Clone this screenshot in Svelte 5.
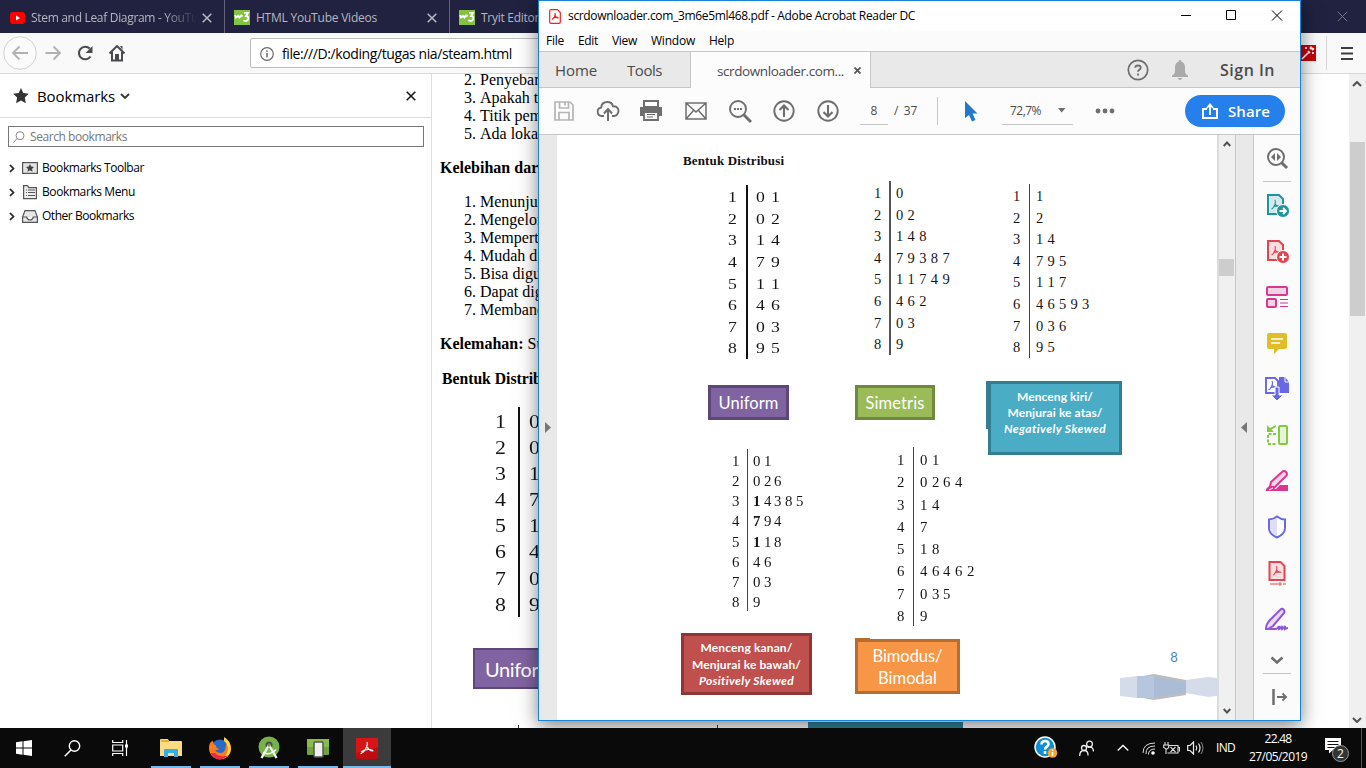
<script>
  const charts = {
    uniform: ['01', '02', '14', '79', '11', '46', '03', '95'],
    simetris: ['0', '02', '148', '79387', '11749', '462', '03', '9'],
    kiri: ['1', '2', '14', '795', '117', '46593', '036', '95'],
    kanan: ['01', '026', '14385', '794', '118', '46', '03', '9'],
    bimodus: ['01', '0264', '14', '7', '18', '46462', '035', '9'],
    web: ['0', '0', '1', '7', '1', '4', '0', '9']
  };
  const menus = [['File', 18], ['Edit', 20], ['View', 25], ['Window', 44], ['Help', 25]];
  const folders = ['Bookmarks Toolbar', 'Bookmarks Menu', 'Other Bookmarks'];
  const folderWidths = [102, 93, 92];
  const firstList = ['Penyebar', 'Apakah t', 'Titik pem', 'Ada loka'];
  const secondList = ['Menunju', 'Mengelor', 'Mempert', 'Mudah d', 'Bisa digu', 'Dapat dig', 'Memband'];

  /* Adjusts tracking so a label keeps its designed width. */
  function fit(node, width) {
    const natural = node.getBoundingClientRect().width;
    node.style.letterSpacing = `${(width - natural) / node.textContent.length}px`;
  }
</script>

{#snippet chart(name)}
  <div class="chart {name}">
    <div class="stems">{#each charts[name] as _, i}<span>{i + 1}</span>{/each}</div>
    <div class="leaves">
      {#each charts[name] as row, r}
        <div>{#each row.split('') as d, c}<span class:heavy={name === 'kanan' && c === 0 && (r === 2 || r === 3 || r === 4)}>{d}</span>{/each}</div>
      {/each}
    </div>
  </div>
{/snippet}

{#snippet w3()}
  <svg class="fav" width="16" height="15" viewBox="0 0 16 15"><rect width="16" height="15" fill="#84c340" /><path d="M1 5l1 2.500L4 6l1.500 1.500L7 5M7 5l1.500 1.500M10 2.800h4l-2 3.200q2.500 0 2.300 2.500Q14 11 11.500 11q-1.500 0-2-1" fill="none" stroke="#fff" stroke-width="1.800" /></svg>
{/snippet}

{#snippet cross(size, color, w)}
  <svg width={size} height={size} viewBox="0 0 10 10"><path d="M.7.7l8.600 8.600M9.300.7L.7 9.300" stroke={color} stroke-width={w} fill="none" /></svg>
{/snippet}

{#snippet reader(x, y, color)}
  <path transform="translate({x} {y})" d="M4 0c1 2 .5 3.500-.3 5C2.800 7 1.500 9 .4 8.800M3.900 3.500c1 2 2.500 3.200 5 2.700M2.500 6.800c2-1 4-1.200 6-.6" fill="none" stroke={color} stroke-width="1.100" />
{/snippet}

<div class="desktop">
  <div class="browser">
    <div class="tabs">
      <div class="tab first">
        <svg width="15" height="12" viewBox="0 0 15 12"><rect width="15" height="12" rx="3" fill="#f00" /><path d="M6 3.500v5L10 6z" fill="#fff" /></svg>
        <span class="label fade"><span use:fit={167}>Stem and Leaf Diagram - YouTu</span></span>
        {@render cross(10, '#b9b9c4', 1.5)}
      </div>
      <div class="tab">
        {@render w3()}
        <span class="label"><span use:fit={121}>HTML YouTube Videos</span></span>
        {@render cross(10, '#b9b9c4', 1.5)}
      </div>
      <div class="tab">
        {@render w3()}
        <span class="label"><span use:fit={58}>Tryit Editor</span></span>
      </div>
      <div class="tabs-close">{@render cross(11, '#77788a', 0.9)}</div>
    </div>

    <div class="nav">
      <svg class="navicons" width="128" height="39" viewBox="0 0 128 39">
        <circle cx="20" cy="19" r="16.300" fill="#fbfbfb" stroke="#d2d2d3" />
        <g fill="none" stroke="#b2b2b3" stroke-width="1.900">
          <path d="M12.500 19H28M19.500 12.500L13 19l6.500 6.500" />
          <path d="M45.500 19H60M53.500 12.500L60 19l-6.500 6.500" />
        </g>
        <path d="M90.500 22.500A6.300 6.300 0 1 1 89.700 14.500" fill="none" stroke="#4b4b4d" stroke-width="2.100" /><path d="M92.500 12v7h-7z" fill="#4b4b4d" />
        <g fill="none" stroke="#4b4b4d" stroke-width="2"><path d="M109.500 19.500L117 12l7.500 7.500" stroke-linejoin="round" /><path d="M112 18v8.500h10V18" /></g><path d="M115 20h4v6h-4z" fill="#4b4b4d" /><path d="M120 12h2.500v4z" fill="#4b4b4d" />
      </svg>
      <div class="url">
        <svg width="14" height="14" viewBox="0 0 14 14"><circle cx="7" cy="7" r="6.300" fill="none" stroke="#6b6b6c" stroke-width="1.200" /><path d="M7 6v4.500M7 3.300v1.400" stroke="#6b6b6c" stroke-width="1.500" /></svg>
        <span use:fit={230}>file:///D:/koding/tugas nia/steam.html</span>
      </div>
      <div class="navright">
        <svg width="16" height="16" viewBox="0 0 16 16"><rect width="16" height="16" fill="#c80009" /><path d="M2 14L9 7M8 6l2 2M11 1.500v3M9.500 3h3M13 7v2M6 2v2M12 5l2-1.500" stroke="#fff" stroke-width="1.700" /></svg>
        <i></i>
        <svg class="burger" width="12" height="13" viewBox="0 0 12 13"><path d="M0 1h12M0 6.500h12M0 12h12" stroke="#3e3e3f" stroke-width="2" /></svg>
      </div>
    </div>

    <div class="content">
      <aside>
        <header>
          <svg width="16" height="16" viewBox="0 0 16 16"><path d="M8 0l2.300 5.100 5.500.7-4 3.800 1 5.700L8 12.500l-4.900 2.800 1-5.700-4-3.800 5.600-.7z" fill="#333" /></svg>
          <span use:fit={78}>Bookmarks</span>
          <svg class="down" width="10" height="6" viewBox="0 0 10 6"><path d="M1 1l4 4 4-4" fill="none" stroke="#333" stroke-width="1.800" /></svg>
          <div class="close">{@render cross(10, '#1a1a1a', 1.6)}</div>
        </header>
        <div class="search">
          <svg width="12" height="12" viewBox="0 0 12 12"><circle cx="7" cy="4.700" r="4" fill="none" stroke="#888" /><path d="M4 7.500L.5 11.500" stroke="#888" /></svg>
          <span use:fit={97}>Search bookmarks</span>
        </div>
        <ul>
          {#each folders as name, i}
            <li>
              <svg width="6" height="9" viewBox="0 0 6 9"><path d="M1 1l3.500 3.500L1 8" fill="none" stroke="#222" stroke-width="1.700" /></svg>
              <svg class="folder" width="16" height="15" viewBox="0 0 16 15">
                {#if i === 0}<rect x=".6" y="1.600" width="14.800" height="10.800" fill="#e4e4e4" stroke="#555" stroke-width="1.200" /><path d="M8 3l1.300 2.500 2.700.4-2 2 .6 2.800L8 9.300l-2.600 1.400.6-2.800-2-2 2.700-.4z" fill="#444" />
                {:else if i === 1}<path d="M1.600.6h4l1 2h7.800v11H1.600z" fill="#efefef" stroke="#555" stroke-width="1.200" /><path d="M4 5h1M6 5h7M4 7.500h1M6 7.500h7M4 10.500h1M6 10.500h7" stroke="#555" />
                {:else}<path d="M.6 8L3 1.600h10L15.400 8v5.400H.6zM.6 8h4q1 3 3.400 3t3.400-3h4" fill="#e6e6e6" stroke="#555" stroke-width="1.200" />{/if}
              </svg>
              <span use:fit={folderWidths[i]}>{name}</span>
            </li>
          {/each}
        </ul>
      </aside>
      <main>
        <ol start="2">{#each firstList as t}<li>{t}</li>{/each}</ol>
        <p><b>Kelebihan dar</b></p>
        <ol>{#each secondList as t}<li>{t}</li>{/each}</ol>
        <p><b>Kelemahan:</b> Su</p>
        <h4>Bentuk Distrib</h4>
        {@render chart('web')}
        <div class="webbadge">Unifor</div>
        <div class="webnext"><i></i><i></i><b></b></div>
      </main>
      <div class="vscroll">
        <svg width="10" height="6" viewBox="0 0 10 6"><path d="M1 5l4-4 4 4" fill="none" stroke="#505050" stroke-width="2" /></svg>
        <i></i>
        <svg width="10" height="6" viewBox="0 0 10 6"><path d="M1 1l4 4 4-4" fill="none" stroke="#505050" stroke-width="2" /></svg>
      </div>
    </div>
  </div>

  <div class="acrobat">
    <div class="title">
      <svg width="12" height="15" viewBox="0 0 12 15"><path d="M2 .7h6.500l2.800 2.800V13q0 1.300-1.300 1.300H2Q.7 14.300.7 13V2Q.7.7 2 .7z" fill="#fff" stroke="#e22" stroke-width="1.200" /><path d="M6 4c.5 2-1 5-3 6.500M5.500 6q1 2.500 4 3M4 9q2.500-1 5-.2" fill="none" stroke="#e22" stroke-width="1.300" /></svg>
      <span use:fit={347}>scrdownloader.com_3m6e5ml468.pdf - Adobe Acrobat Reader DC</span>
      <svg class="controls" width="102" height="12" viewBox="0 0 102 12"><path d="M0 5.500h10M45.500.5h9v9h-9zM91 .5l10 10M101 .5l-10 10" fill="none" stroke="#000" /></svg>
    </div>
    <div class="menubar">{#each menus as [m, w]}<span use:fit={w}>{m}</span>{/each}</div>
    <div class="doctabs">
      <div class="plain"><span use:fit={42}>Home</span><span use:fit={35}>Tools</span></div>
      <div class="active"><span use:fit={127}>scrdownloader.com...</span>{@render cross(7, '#555', 2.5)}</div>
      <div class="account">
        <svg width="22" height="22" viewBox="0 0 22 22"><circle cx="11" cy="11" r="9.700" fill="none" stroke="#6e6e6e" stroke-width="1.700" /><path d="M8.300 8.800Q8.300 6.500 11 6.500t2.700 2.200Q13.700 10 12 11q-1 .7-1 1.800M11 14.500v2" fill="none" stroke="#6e6e6e" stroke-width="1.800" /></svg>
        <svg class="bell" width="18" height="20" viewBox="0 0 18 20"><path d="M9 0q1.500 0 1.500 1.700Q14 3 14 7v4q0 3 3 4.500V17H1v-1.500Q4 14 4 11V7q0-4 3.500-5.300Q7.500 0 9 0zM6.500 18h5q-1 2-2.500 2t-2.500-2z" fill="#aaa" /></svg>
        <b use:fit={55}>Sign In</b>
      </div>
    </div>
    <div class="toolbar">
      <div class="slot"><svg width="22" height="22" viewBox="0 0 22 22"><path d="M2 2h15l3 3v15H2zM6.500 2v6h9V2M12 2.500v3M6 20v-7.500h10V20" fill="none" stroke="#b5b5b5" stroke-width="1.700" /></svg></div>
      <div class="slot"><svg width="24" height="24" viewBox="0 0 24 24"><path d="M8 17H5.500a4.300 4.300 0 0 1-.3-8.500C5.500 4.500 8.500 3 11.500 3c3 0 5 2 5.500 4.300 3.500-.3 5.500 2 5.500 4.500S20.500 17 18 17h-2" fill="none" stroke="#6e6e6e" stroke-width="1.900" /><path d="M12 22V11M8 14.500L12 10l4 4.500" fill="none" stroke="#6e6e6e" stroke-width="2" /></svg></div>
      <div class="slot"><svg class="print" width="24" height="24" viewBox="0 0 24 24"><path d="M5 2h14v6H5z" fill="none" stroke="#6e6e6e" stroke-width="2" /><path d="M1 8h22v9h-4v-4H5v4H1z" fill="#6e6e6e" /><path d="M5 13h14v8H5z" fill="#fbfbfb" stroke="#6e6e6e" stroke-width="1.800" /><path d="M8 15.500h8M8 18h6" stroke="#6e6e6e" stroke-width="1.200" /></svg></div>
      <div class="slot"><svg width="24" height="20" viewBox="0 0 24 20"><path d="M2 2h20v16H2zM2 2l10 9L22 2M2 18l7.500-8.500M22 18l-7.500-8.500" fill="none" stroke="#6e6e6e" stroke-width="1.500" /></svg></div>
      <div class="slot"><svg width="24" height="24" viewBox="0 0 24 24"><circle cx="10" cy="10" r="8" fill="none" stroke="#6e6e6e" stroke-width="1.900" /><path d="M15.500 15.500L23 23" stroke="#6e6e6e" stroke-width="3" /><path d="M6 9h2v2H6zM9 9h2v2H9zM12 9h2v2h-2z" fill="#6e6e6e" /></svg></div>
      <div class="slot"><svg width="24" height="24" viewBox="0 0 24 24"><circle cx="12" cy="12" r="9.700" fill="none" stroke="#6e6e6e" stroke-width="1.900" /><path d="M12 18V7M7.500 11L12 6.500l4.500 4.500" fill="none" stroke="#6e6e6e" stroke-width="2.100" /></svg></div>
      <div class="slot"><svg width="24" height="24" viewBox="0 0 24 24"><circle cx="12" cy="12" r="9.700" fill="none" stroke="#6e6e6e" stroke-width="1.900" /><path d="M12 6v11M7.500 13l4.500 4.500 4.500-4.500" fill="none" stroke="#6e6e6e" stroke-width="2.100" /></svg></div>
      <div class="pageno">8</div>
      <span class="of" use:fit={23}>/&nbsp; 37</span>
      <i class="sep"></i>
      <svg class="cursor" width="13" height="21" viewBox="0 0 13 21"><path d="M0 0l12.500 12.500H7.500l3 6.500-3.500 1.500-3-6.500L0 17z" fill="#2577cc" /></svg>
      <div class="zoom"><span use:fit={31}>72,7%</span><svg width="8" height="5" viewBox="0 0 8 5"><path d="M0 0h7.500L3.700 4.500z" fill="#6e6e6e" /></svg></div>
      <svg class="dots" width="20" height="6" viewBox="0 0 20 6"><g fill="#6e6e6e"><circle cx="3" cy="3" r="2.400" /><circle cx="10" cy="3" r="2.400" /><circle cx="17" cy="3" r="2.400" /></g></svg>
      <div class="share">
        <svg width="16" height="17" viewBox="0 0 16 17"><path d="M5 6H1v9h14V6h-4" fill="none" stroke="#fff" stroke-width="2" /><path d="M8 12V2M5 5l3-3.500L11 5" fill="none" stroke="#fff" stroke-width="1.800" /></svg>
        <b use:fit={42}>Share</b>
      </div>
    </div>
    <div class="viewer">
      <div class="gutter"><svg width="6" height="11" viewBox="0 0 6 11"><path d="M0 0l6 5.500L0 11z" fill="#777" /></svg></div>
      <div class="page">
        <h4>Bentuk Distribusi</h4>
        <div class="charts one">{@render chart('uniform')}{@render chart('simetris')}{@render chart('kiri')}</div>
        <div class="badges one">
          <div class="badge purple"><span use:fit={60}>Uniform</span></div>
          <div class="badge green"><span use:fit={59}>Simetris</span></div>
          <div class="badge teal"><span use:fit={76}>Menceng kiri/</span><span use:fit={95}>Menjurai ke atas/</span><em use:fit={102}>Negatively Skewed</em></div>
        </div>
        <div class="charts two">{@render chart('kanan')}{@render chart('bimodus')}</div>
        <div class="badges two">
          <div class="badge red"><span use:fit={92}>Menceng kanan/</span><span use:fit={109}>Menjurai ke bawah/</span><em use:fit={95}>Positively Skewed</em></div>
          <div class="badge orange"><span use:fit={70}>Bimodus/</span><span use:fit={59}>Bimodal</span></div>
          <div class="folio">
            <span>8</span>
            <svg width="97" height="26" viewBox="0 0 97 26"><path d="M17 3L34 0l32 6v15l-32 5-17-3z" fill="#bdbdbd" /><path d="M0 4l17-2v22L0 22z" fill="#d4dce9" /><path d="M17 2l17 0v22l-17 0z" fill="#b6c6df" /><path d="M34 3l32 5v10l-32 6z" fill="#abbcd6" /><path d="M66 6l22-3 9 1v18l-9 1-22-4z" fill="#d4dce9" /></svg>
          </div>
        </div>
      </div>
      <div class="pscroll">
        <svg width="8" height="6" viewBox="0 0 8 6"><path d="M.7 5L4 1.500 7.300 5" fill="none" stroke="#505050" stroke-width="1.900" /></svg>
        <i></i>
        <svg width="8" height="6" viewBox="0 0 8 6"><path d="M.7 1L4 4.500 7.300 1" fill="none" stroke="#505050" stroke-width="1.900" /></svg>
      </div>
      <div class="collapse"><svg width="6" height="11" viewBox="0 0 6 11"><path d="M6 0L0 5.500 6 11z" fill="#777" /></svg></div>
      <div class="tools">
        <div class="tool line"><svg width="24" height="24" viewBox="0 0 24 24"><circle cx="11" cy="11" r="8" fill="none" stroke="#6e6e6e" stroke-width="2" /><path d="M16.500 16.500L22 22" stroke="#6e6e6e" stroke-width="3" /><path d="M10 7v8l-4-4zM12 7v8l4-4z" fill="#6e6e6e" /></svg></div>
        <div class="tool"><svg width="24" height="24" viewBox="0 0 24 24"><path d="M3 2h11l4 4v15H3z" fill="#d3e9ec" stroke="#1f949b" stroke-width="2" />{@render reader(6, 7, '#1f949b')}<circle cx="18" cy="18" r="6.500" fill="#1f949b" stroke="#fbfbfb" /><path d="M14.500 18h6M18 15l3 3-3 3" fill="none" stroke="#fff" stroke-width="1.800" /></svg></div>
        <div class="tool"><svg width="24" height="24" viewBox="0 0 24 24"><path d="M3 2h11l4 4v15H3z" fill="#f8dfe1" stroke="#e3454f" stroke-width="2" />{@render reader(6, 7, '#e3454f')}<circle cx="18" cy="18" r="6.500" fill="#e3454f" stroke="#fbfbfb" /><path d="M14.500 18h7M18 14.500v7" stroke="#fff" stroke-width="2" /></svg></div>
        <div class="tool"><svg width="24" height="24" viewBox="0 0 24 24"><g fill="#f2d3e5" stroke="#d83790" stroke-width="2"><rect x="2" y="2" width="20" height="8" rx="1" /><rect x="2" y="14" width="9" height="8" rx="1" /></g><path d="M15 14.500h8M15 18h8M15 21.500h8" stroke="#d83790" /></svg></div>
        <div class="tool"><svg width="24" height="24" viewBox="0 0 24 24"><path d="M4 2h16q2 0 2 2v12q0 2-2 2h-6l-5 5v-5H4q-2 0-2-2V4q0-2 2-2z" fill="#dfbe28" /><path d="M6 8h12M6 12h9" stroke="#fff" stroke-width="1.500" /></svg></div>
        <div class="tool"><svg width="26" height="26" viewBox="0 0 26 26"><path d="M15 1h6l4 5v11H15z" fill="#6767e8" /><path d="M21 1v5h4" fill="none" stroke="#fbfbfb" /><path d="M2 2h9l3 3v12H2z" fill="#fff" stroke="#6767e8" stroke-width="1.900" />{@render reader(4, 5, '#6767e8')}<path d="M11 11h4v8h4l-6 6-6-6h4z" fill="#6767e8" stroke="#fbfbfb" /></svg></div>
        <div class="tool"><svg width="24" height="24" viewBox="0 0 24 24"><rect x="14" y="3" width="8" height="18" rx="1" fill="#e4f3da" stroke="#85cb40" stroke-width="2" /><path d="M11 11H3v10h8" fill="none" stroke="#85cb40" stroke-width="2" stroke-dasharray="3 1.500" /><path d="M2 2v7h7L6.500 6.500 11 4V2L5 5z" fill="#85cb40" /></svg></div>
        <div class="tool"><svg width="24" height="24" viewBox="0 0 24 24"><path d="M1 22v-2l4-4 4 3 2 1 4-4h8v6z" fill="#dc3790" /><path d="M5 18l1-5L17 3q2-2 4 0t0 4L10 18z" fill="#f4d4e5" stroke="#dc3790" stroke-width="2" /><path d="M4 21l4-2M10 20l3-3" stroke="#fff" /></svg></div>
        <div class="tool"><svg width="22" height="24" viewBox="0 0 22 24"><path d="M11 1.500q4 3 8 3V13q0 6-8 9.500Q3 19 3 13V4.500q4 0 8-3z" fill="#fff" stroke="#6767e8" stroke-width="2" /><path d="M11 3v18Q4 18 4 13V5.500q4 0 7-2.500z" fill="#dedef6" /></svg></div>
        <div class="tool"><svg width="24" height="26" viewBox="0 0 24 26"><path d="M4.500 2h11l4 4v14h-15z" fill="#f8dfe1" stroke="#e3454f" stroke-width="2" />{@render reader(7.5, 6, '#e3454f')}<path d="M5 24h8M18 24h3" stroke="#e3454f" stroke-width="1.200" /><circle cx="15" cy="24" r="1.200" fill="none" stroke="#e3454f" /></svg></div>
        <div class="tool"><svg width="26" height="24" viewBox="0 0 26 24"><path d="M2 22q0-5 4-9L16 3q2-2 3.500-.5T20 6L9 19l-5 3z" fill="#e7dcf3" stroke="#9256d9" stroke-width="2" /><path d="M2 22h9q3 0 4-3v3q2-1 3-3v3q2-1 3-3v3q1.500-1 3-1" fill="none" stroke="#9256d9" stroke-width="2" /></svg></div>
        <div class="tool more"><svg width="14" height="8" viewBox="0 0 14 8"><path d="M1.500 1.500L7 6.500l5.500-5" fill="none" stroke="#6e6e6e" stroke-width="2.500" /></svg></div>
        <div class="tool last"><svg width="16" height="16" viewBox="0 0 16 16"><path d="M1.500 0v16" stroke="#6e6e6e" stroke-width="2.500" /><path d="M5 8h9M10.500 4.500L14 8l-3.500 3.500" fill="none" stroke="#6e6e6e" stroke-width="1.900" /></svg></div>
      </div>
    </div>
  </div>

  <div class="taskbar">
    <div class="sys"><svg width="16" height="16" viewBox="0 0 16 16"><path d="M0 2.300L6.500 1.300V7.500H0zM7.500 1.200L16 0v7.500H7.500zM0 8.500h6.500v6.200L0 13.700zM7.500 8.500H16V16l-8.500-1.200z" fill="#fff" /></svg></div>
    <div class="sys"><svg width="17" height="17" viewBox="0 0 17 17"><circle cx="10.500" cy="6" r="5.200" fill="none" stroke="#fff" stroke-width="1.400" /><path d="M7 10L.7 16.300" stroke="#fff" stroke-width="1.500" /></svg></div>
    <div class="sys"><svg width="16" height="16" viewBox="0 0 16 16"><path d="M.7 0v2.500h10V0M.7 16v-2.500h10V16M.7 5h10v6H.7zM14.500 0v16" fill="none" stroke="#fff" stroke-width="1.200" /><path d="M13 4.500h3v3h-3z" fill="#fff" /></svg></div>
    <div class="app push"><svg width="22" height="20" viewBox="0 0 22 20"><path d="M0 2q0-1 1-1h7l1 2h12q1 0 1 1v14H0z" fill="#fbdc83" /><path d="M1 3h8" stroke="#dba526" stroke-width="1.500" /><path d="M4 19v-7q0-1 1-1h12q1 0 1 1v7h-4v-4H8v4z" fill="#36aee3" /></svg></div>
    <div class="app"><svg width="24" height="24" viewBox="0 0 24 24"><circle cx="12" cy="13" r="9.500" fill="#276ac8" /><path d="M2 7Q0 12 2 17q3 6 10 6.500 8-.5 10.500-7.500 1.500-8-4-13Q19 8 17.500 11q0 5-4.500 6-4.500 0-6-3 2 .5 4.500-1-3.500-.5-3.500-3.500L5.500 8 4.500 4.500z" fill="#ff7a1a" /><path d="M16 1q7 4 7 12-1 8-9 10 6-5 6-11-1-5-4-7z" fill="#ffd43a" /><path d="M2.500 17q3 6 9.500 6.500 5-.5 8-4-8 2.500-13-2.500z" fill="#ec2a48" /></svg></div>
    <div class="app"><svg width="22" height="24" viewBox="0 0 22 24"><circle cx="11" cy="11" r="10.500" fill="#78b246" /><circle cx="11" cy="9" r="3.500" fill="#4c4c4c" /><path d="M11 9L3.500 22M11 9l7.500 13" stroke="#eee" stroke-width="2.500" /><path d="M5 16.500q7 3.500 13-3" fill="none" stroke="#fff" stroke-width="1.500" /><circle cx="11" cy="9" r="1.700" fill="#73974e" /></svg></div>
    <div class="app"><svg width="22" height="20" viewBox="0 0 22 20"><rect y="1" width="22" height="16" rx="1" fill="#71a43c" /><path d="M0 1h22v8H0z" fill="#88bd4a" /><rect x="7" y="4" width="9" height="15" rx="1" fill="#efefef" stroke="#555" stroke-width="1.500" /></svg></div>
    <div class="app on"><svg width="22" height="21" viewBox="0 0 22 21"><rect width="22" height="21" rx="1" fill="#bf0c10" /><path d="M0 0h22v9L0 15z" fill="#d71519" /><path d="M11 4c1 3 0 5-2 8-1.500 2-3 4-4.500 3.500M10.500 7c1 4 3.500 6 7 6M5 14c4-3 9-3 12-1.500" fill="none" stroke="#fff" stroke-width="1.200" /></svg></div>
    <div class="tray">
      <svg class="help" width="24" height="24" viewBox="0 0 24 24"><circle cx="11" cy="11" r="10" fill="#128dd1" stroke="#fff" stroke-width="1.500" /><path d="M7.500 8.500Q7.500 5 11 5t3.500 3q0 2-2 3-1.500 1-1.500 2.500M11 15v3" fill="none" stroke="#fff" stroke-width="2.600" /><circle cx="18.500" cy="17" r="4.800" fill="#f2a62c" /><path d="M18.500 16v4M18.500 13.500v1.300" stroke="#fff" stroke-width="1.500" /></svg>
      <svg class="people" width="15" height="17" viewBox="0 0 15 17"><g fill="none" stroke="#eee" stroke-width="1.300"><circle cx="10.500" cy="4" r="2.900" /><circle cx="5" cy="8" r="2.500" /><path d="M.7 16q0-5.500 4.300-5.500t4 5M8.500 7.500q5.500-2 6 4" /></g></svg>
      <svg class="chev" width="12" height="8" viewBox="0 0 12 8"><path d="M.7 6.500l5.300-5 5.300 5" fill="none" stroke="#fff" stroke-width="1.300" /></svg>
      <svg class="wifi" width="14" height="14" viewBox="0 0 14 14"><g fill="none" stroke="#ddd"><path d="M1 12Q1 2 13 2M4 13Q3.500 5 13 5M6.500 13.500Q6.500 8 13 8" /></g><circle cx="11" cy="12" r="1.800" fill="#fff" /></svg>
      <svg class="batt" width="17" height="13" viewBox="0 0 17 13"><path d="M6 3.500h9v7.500H4.500M15.500 5.500h1v4M2 0v3M5 0v3M.7 3h5v2.500q-2 2-2.500 1.500T.7 5.500zM3 7v5M7.500 5l5 5M12.500 5l-5 5" fill="none" stroke="#ddd" stroke-width="1.100" /></svg>
      <svg class="vol" width="17" height="14" viewBox="0 0 17 14"><path d="M.7 4.500H3L6.500 1v12L3 9.500H.7z" fill="none" stroke="#eee" stroke-width="1.200" /><path d="M9 4.500q1.500 2.500 0 5M11.500 2.500q3 4.500 0 9" fill="none" stroke="#eee" stroke-width="1.200" /><path d="M14 1q4 6 0 12" fill="none" stroke="#888" /></svg>
      <span class="lang" use:fit={19}>IND</span>
      <div class="clock"><span use:fit={27}>22.48</span><span use:fit={58}>27/05/2019</span></div>
      <div class="note"><svg width="16" height="16" viewBox="0 0 16 16"><path d="M0 0h16v12H8l-4 3.500V12H0z" fill="#fff" /><path d="M2.500 3.500h11M2.500 6.500h11M2.500 9.500h7" stroke="#111" /></svg><span>2</span></div>
      <i></i>
    </div>
  </div>
</div>

<style>
  :global(body) { margin: 0; overflow: hidden; }
  * { box-sizing: border-box; }
  svg { display: block; flex: none; }
  span { white-space: nowrap; }
  .desktop { position: relative; width: 1366px; height: 768px; overflow: hidden; font: 12px/16px "Open Sans", sans-serif; color: #000; display: flex; flex-direction: column; }
  .browser { height: 728px; flex: none; display: flex; flex-direction: column; background: #fff; }

  .tabs { height: 33px; background: #20223f; display: flex; color: #b7b7c1; }
  .tab { width: 225px; display: flex; align-items: center; padding: 2px 12px 0 9px; border-right: 1px solid #62637a; }
  .tab.first { padding-left: 10px; }
  .tab svg:last-child { margin-left: auto; }
  .label { margin-left: 6px; }
  .fade { width: 167px; overflow: hidden; mask-image: linear-gradient(90deg, #000 132px, transparent 166px); }
  .tab:nth-child(3) { border: 0; }
  .tabs-close { margin-left: auto; padding: 11px 18px 0 0; }

  .nav { height: 41px; background: #f9f9fa; border-bottom: 1px solid #d9d9da; display: flex; align-items: center; }
  .url { margin-left: 122px; width: 1020px; height: 30px; background: #fff; border: 1px solid #bcbcbe; border-radius: 2px; display: flex; align-items: center; gap: 8px; padding: 1px 0 0 9px; font-size: 14px; }
  .navright { display: flex; align-items: center; margin-left: 30px; }
  .navright i { width: 1px; height: 34px; background: #d7d7d8; margin: 0 14px 0 10px; }

  .content { flex: 1; display: flex; min-height: 0; }
  aside { width: 432px; border-right: 1px solid #ddd; }
  aside header { height: 44px; border-bottom: 1px solid #ddd; display: flex; align-items: center; padding: 0 15px 0 13px; font-size: 15px; }
  header span { margin-left: 8px; }
  .down { margin: 1px 0 0 5px; }
  .close { margin-left: auto; }
  .search { margin: 8px 7px 0 8px; height: 21px; border: 1px solid #777; display: flex; align-items: center; gap: 5px; padding-left: 4px; color: #777; }
  aside ul { list-style: none; margin: 9px 0 0; padding: 0; }
  aside li { height: 24px; display: flex; align-items: center; padding-left: 9px; }
  .folder { margin: 0 4px 0 7px; }

  main { flex: 1; min-width: 0; overflow: hidden; padding-left: 8px; font: 16px/18px "Liberation Serif", serif; }
  main ol { margin: 0; padding-left: 40px; }
  main ol:first-child { margin-top: -3px; }
  main p { margin: 16px 0; white-space: nowrap; }
  main h4 { margin: 17px 0 0 2px; font-size: 15.700px; line-height: 18px; white-space: nowrap; }
  .webbadge { margin: 31px 0 0 33px; width: 155px; height: 41px; border: 2px solid #5c4879; background: #8064a2; color: #fff; font: 20px/38px Lato, sans-serif; padding-left: 10px; letter-spacing: -.4px; }
  .webnext { display: flex; padding-left: 78px; margin-top: 33px; height: 8px; align-items: flex-end; }
  .webnext i { width: 1px; height: 5px; background: #333; margin-right: 198px; }
  .webnext i + i { margin-right: 90px; }
  .webnext b { width: 155px; height: 8px; background: #31849b; }
  .vscroll { width: 17px; background: #f0f0f0; display: flex; flex-direction: column; align-items: center; padding: 7px 1px 5px 0; }
  .vscroll i { width: 15px; height: 174px; background: #cdcdcd; margin: 55px 0 auto; }

  .acrobat { position: absolute; left: 538px; top: 0; width: 763px; height: 721px; border: 1px solid #1883d7; background: #fcfcfc; box-shadow: 0 5px 18px rgba(0, 0, 0, .5); display: flex; flex-direction: column; }
  .title { height: 30px; background: #fff; display: flex; align-items: center; padding: 0 17px 0 10px; }
  .title span { margin-left: 7px; }
  .controls { margin-left: auto; }
  .menubar { height: 21px; background: #fbfbfb; border-bottom: 1px solid #c6c6c6; display: flex; align-items: center; gap: 14px; padding-left: 7px; }
  .doctabs { height: 36px; background: #e9e9e9; display: flex; }
  .plain { width: 152px; border-right: 1px solid #c6c6c6; border-bottom: 1px solid #c6c6c6; display: flex; align-items: center; padding-left: 16px; gap: 30px; font-size: 15px; color: #4b4b4b; }
  .active { width: 180px; background: #fcfcfc; border-right: 1px solid #c6c6c6; display: flex; align-items: center; padding: 1px 0 0 26px; gap: 10px; font-size: 13.500px; color: #4b4b4b; }
  .account { flex: 1; border-bottom: 1px solid #c6c6c6; display: flex; align-items: center; justify-content: flex-end; padding-right: 25px; color: #4b4b4b; font-size: 16px; }
  .account b { font-weight: 600; margin-left: 31px; white-space: nowrap; }
  .bell { margin-left: 22px; }
  .toolbar { height: 47px; background: #fcfcfc; border-bottom: 1px solid #c6c6c6; display: flex; align-items: center; padding-left: 3px; color: #4b4b4b; }
  .slot { width: 44px; display: grid; place-items: center; }
  .print { margin-right: 2px; }
  .pageno { width: 28px; height: 28px; margin-left: 10px; border-bottom: 1px solid #c6c6c6; text-align: center; line-height: 27px; }
  .of { margin-left: 6px; }
  .sep { width: 1px; height: 28px; background: #c6c6c6; margin: 0 27px 0 20px; }
  .zoom { width: 71px; height: 28px; margin-left: 24px; border-bottom: 1px solid #c6c6c6; display: flex; align-items: center; padding-left: 8px; gap: 17px; }
  .dots { margin-left: 22px; }
  .share { width: 100px; height: 32px; border-radius: 16px; background: #2680eb; margin-left: 70px; color: #fff; display: flex; align-items: center; padding-left: 17px; gap: 10px; font-size: 15px; }
  .share b { font-weight: 600; }

  .viewer { flex: 1; display: flex; min-height: 0; }
  .gutter { width: 18px; background: #e9e9e9; padding: 287px 0 0 6px; }
  .page { width: 660px; background: #fff; overflow: hidden; }
  .page h4 { margin: 17px 0 0 126px; font: bold 13px/18px "Liberation Serif", serif; color: #111; letter-spacing: .15px; }
  .charts { display: flex; align-items: flex-start; }
  .charts.one { height: 211px; padding-top: 11px; }
  .charts.two { height: 186px; margin-top: -8px; }

  .chart { display: flex; font-family: "Liberation Serif", serif; color: #161616; line-height: var(--p); font-size: var(--f); }
  .chart span { display: block; }
  .stems { width: var(--sw); border-right: var(--lw) solid var(--lc); padding-top: 2px; height: calc(var(--p) * 8 + 1px); }
  .stems span { height: var(--p); width: var(--f); text-align: left; transform: scaleX(var(--x)); transform-origin: left; }
  .leaves { padding: 2px 0 0 var(--g); }
  .leaves div { display: flex; height: var(--p); }
  .leaves span { width: var(--d); transform: scaleX(var(--x)); transform-origin: left; }
  .leaves .heavy { font-weight: bold; }
  .uniform { --p: 21.650px; --f: 15px; --x: 1.180; --sw: 20px; --lw: 2px; --lc: #111; --g: 8px; --d: 14.500px; margin: 4px 0 0 171px; width: 142px; }
  .simetris { --p: 21.600px; --f: 14.500px; --x: 1; --sw: 17px; --lw: 2px; --lc: #555; --g: 5px; --d: 11.600px; margin-left: 4px; width: 135px; }
  .kiri { --p: 21.600px; --f: 14.500px; --x: 1; --sw: 17px; --lw: 1px; --lc: #444; --g: 6px; --d: 11.500px; margin: 3px 0 0 4px; }
  .kanan { --p: 20.150px; --f: 14px; --x: 1.060; --sw: 16px; --lw: 1px; --lc: #444; --g: 5px; --d: 10.700px; margin: 2px 0 0 175px; width: 161px; }
  .bimodus { --p: 22.300px; --f: 14.500px; --x: 1.020; --sw: 17px; --lw: 1px; --lc: #444; --g: 6px; --d: 11.700px; margin-left: 4px; }
  .kanan .stems, .kanan .leaves { padding-top: 3px; }
  .web { --p: 26.100px; --f: 18.500px; --x: 1.180; --sw: 25px; --lw: 2px; --lc: #111; --g: 9px; --d: 17px; margin: 19px 0 0 55px; height: 209.800px; }

  .badges { display: flex; align-items: flex-start; }
  .badges.one { padding-left: 151px; height: 74px; }
  .badge { color: #fff; font: 16.500px/30px Lato, sans-serif; text-align: center; border: 3px solid; display: flex; flex-direction: column; align-items: center; flex: none; }
  .purple { width: 81px; height: 35px; margin-top: 4px; background: #8064a2; border-color: #5c4776; }
  .green { width: 80px; height: 35px; margin: 4px 0 0 66px; background: #9bbb59; border-color: #71893f; }
  .teal { width: 134px; height: 74px; margin-left: 53px; background: #4bacc6; border-color: #357d91; position: relative; }
  .teal::before { content: ""; position: absolute; left: -5px; top: -3px; width: 2px; height: 48px; background: #357d91; }
  .teal, .red { font: bold 12px/16px Lato, sans-serif; padding-top: 5px; }
  .badges.two { padding-left: 124px; }
  .red { width: 131px; height: 62px; background: #c0504d; border-color: #8c3836; padding-top: 4px; line-height: 16.500px; }
  .orange { width: 105px; height: 55px; margin: 6px 0 0 43px; background: #f79646; border-color: #b66d31; line-height: 22px; padding-top: 3px; position: relative; }
  .orange::before { content: ""; position: absolute; left: -3px; top: -4px; width: 15px; height: 1px; background: #b66d31; }
  .folio { margin: 15px 0 0 160px; width: 97px; }
  .folio span { display: block; text-align: center; padding-left: 11px; color: #4584c4; font-size: 13px; line-height: 18px; margin-bottom: 8px; font-family: Lato, sans-serif; }

  .pscroll { width: 19px; border-left: 2px solid #dcdcdc; border-right: 1px solid #c6c6c6; background: #f0f0f0; display: flex; flex-direction: column; align-items: center; padding: 6px 1px 6px 0; }
  .pscroll i { width: 15px; height: 17px; background: #cdcdcd; margin: 112px 0 auto; }
  .collapse { width: 18px; background: #e9e9e9; border-right: 1px solid #c6c6c6; padding: 287px 0 0 5px; }
  .tools { flex: 1; background: #fbfbfb; }
  .tool { height: 46px; display: grid; place-items: center; }
  .line { height: 47px; border-bottom: 1px solid #c6c6c6; margin: 0 9px; }
  .more { height: 32px; border-bottom: 1px solid #c6c6c6; margin: 0 9px; padding-top: 5px; }
  .last { padding-left: 5px; }

  .taskbar { height: 40px; background: #0a0a0a; display: flex; color: #fff; position: relative; }
  .sys { width: 48px; display: grid; place-items: center; }
  .app { width: 48px; margin-right: 1px; display: grid; place-items: center; background: linear-gradient(#76b9ed, #76b9ed) center bottom / 40px 2px no-repeat; }
  .push { margin-left: 3px; }
  .on { background: linear-gradient(#76b9ed, #76b9ed) center bottom / 48px 2px no-repeat #3b3b3b; }
  .tray { margin-left: 642px; display: flex; align-items: center; flex: 1; }
  .people { margin-left: 21px; }
  .chev { margin-left: 23px; }
  .wifi { margin-left: 13px; }
  .batt { margin-left: 7px; }
  .vol { margin-left: 7px; }
  .lang { margin-left: 12px; }
  .clock { width: 60px; margin-left: 13px; display: flex; flex-direction: column; align-items: center; line-height: 18px; }
  .note { position: relative; margin: -4px 0 0 17px; }
  .note span { position: absolute; left: 7px; top: 7px; width: 17px; height: 17px; border-radius: 50%; border: 1px solid #999; background: #333; text-align: center; line-height: 15px; font-size: 12px; }
  .tray > i { width: 1px; height: 40px; background: #555; margin-left: 20px; }
</style>
